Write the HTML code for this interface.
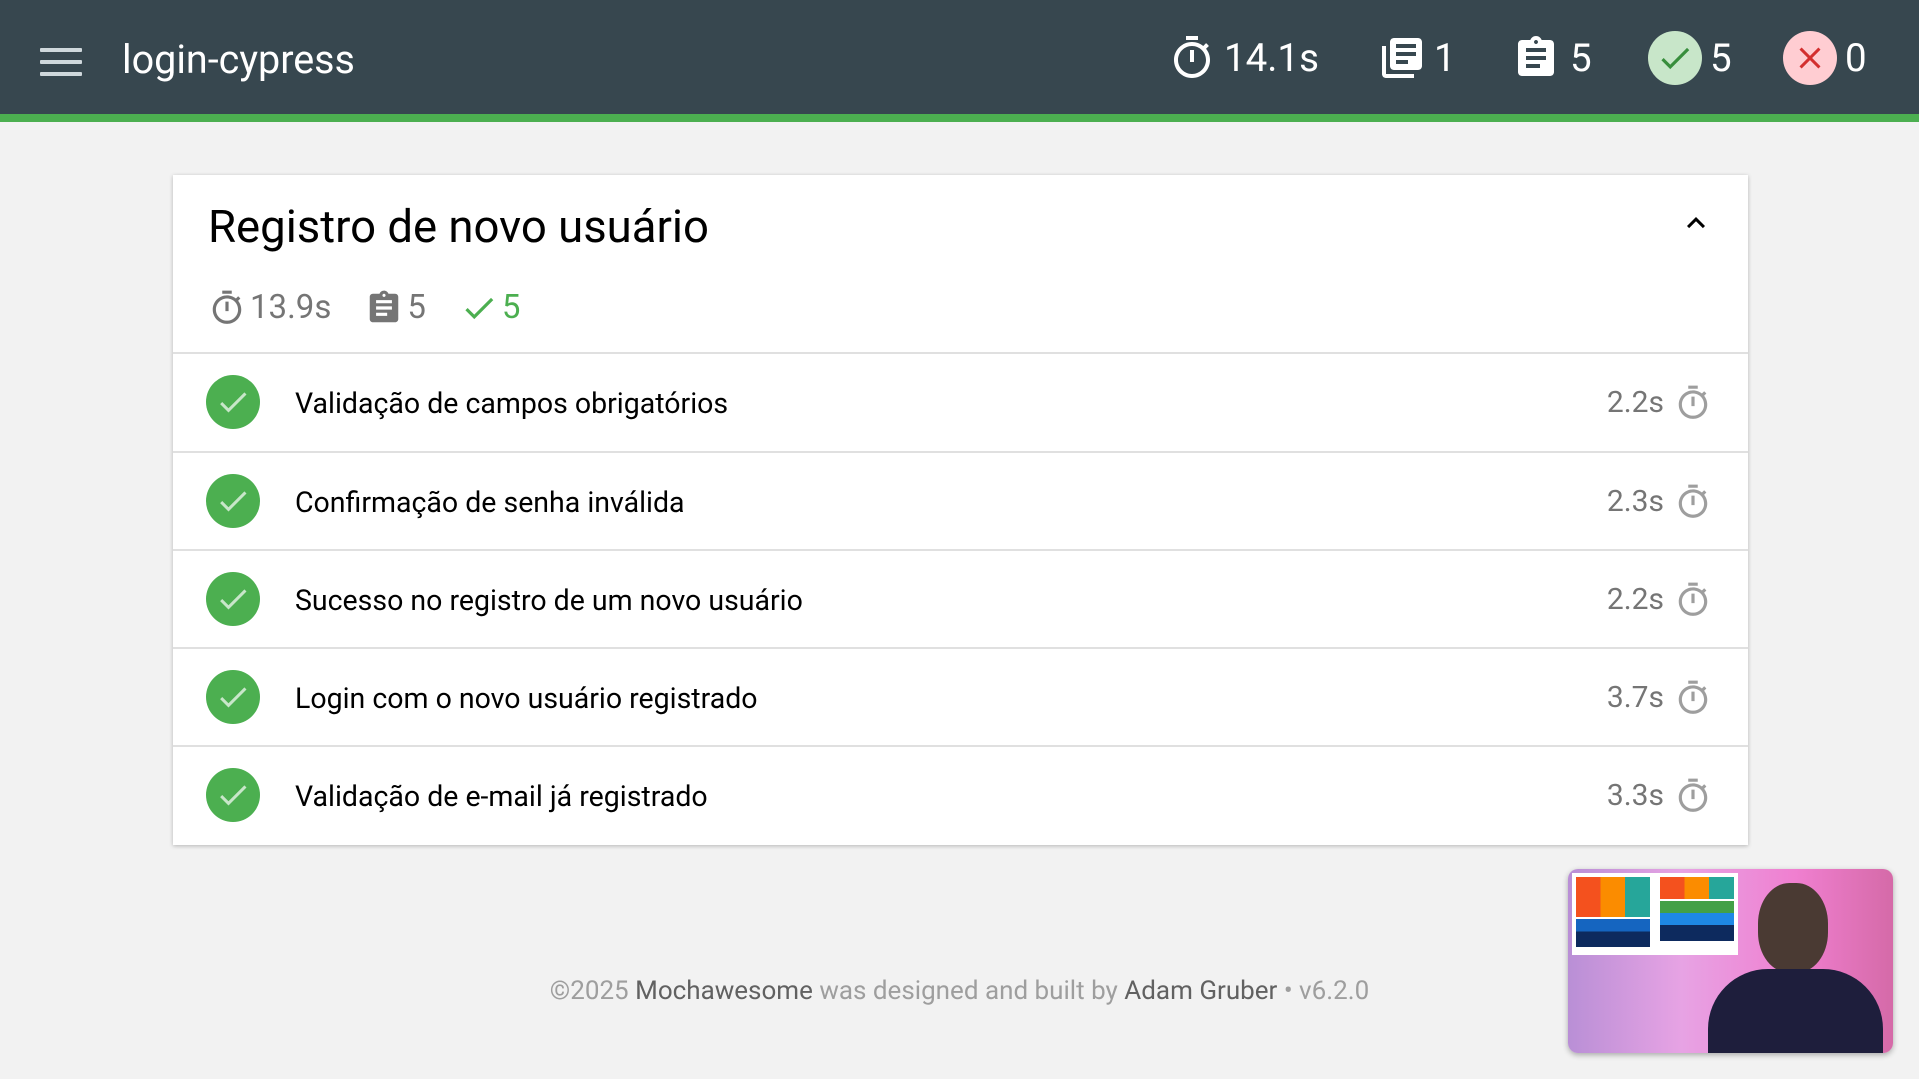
<!DOCTYPE html>
<html><head><meta charset="utf-8"><style>
*{margin:0;padding:0;box-sizing:border-box}
body{width:1919px;height:1079px;overflow:hidden;background:#f2f2f2;font-family:"Roboto","Liberation Sans",sans-serif;position:relative}
.hdr{position:absolute;left:0;top:0;width:1919px;height:122px;background:#37474f;border-bottom:8px solid #4caf50;color:#fff}
.ham{position:absolute;left:40px;top:48px;width:42px}
.ham div{height:4px;background:#cfd8dc;margin-bottom:8px;border-radius:1px}
.ttl{position:absolute;left:122px;top:36px;font-size:39.5px;color:#fff}
.st{position:absolute;top:34px;display:flex;align-items:center;font-size:38.5px;color:#fff}
.st svg{fill:#fff}
.circ{width:54px;height:54px;border-radius:50%;display:flex;align-items:center;justify-content:center;margin-right:8px}
.card{position:absolute;left:173px;top:175px;width:1575px;height:670px;background:#fff;box-shadow:0 1px 4px rgba(0,0,0,.25)}
.h1{position:absolute;left:35px;top:26px;font-size:45.5px;color:#000}
.chev{position:absolute;left:1505px;top:30px}
.meta{position:absolute;left:35px;top:113px;display:flex;align-items:center;font-size:33px;color:#757575}
.meta svg{fill:#757575}
.row{position:absolute;left:0;width:1575px;height:98px;border-top:2px solid #e0e0e0}
.ck{position:absolute;left:33px;top:21px;width:54px;height:54px;border-radius:50%;background:#4caf50;display:flex;align-items:center;justify-content:center}
.rt{position:absolute;left:122px;top:33px;font-size:28.5px;color:#000}
.dur{position:absolute;right:84px;top:31px;font-size:30px;color:#757575}
.tm{position:absolute;right:36px;top:30px;fill:#9e9e9e}
.foot{position:absolute;left:0;width:1919px;top:976px;text-align:center;font-size:26px;color:#9e9e9e}
.foot b{font-weight:normal;color:#616161}
.vid{position:absolute;left:1568px;top:869px;width:325px;height:184px;border-radius:10px;overflow:hidden;background:linear-gradient(90deg,#b98fd6 0%,#e7a3e4 35%,#f07fd0 70%,#d56aa8 100%);box-shadow:0 2px 6px rgba(0,0,0,.3)}
</style></head><body>
<div class="hdr">
 <div class="ham"><div></div><div></div><div></div></div>
 <div class="ttl">login-cypress</div>
 <div class="st" style="left:1168px"><svg width="48" height="48" viewBox="0 0 24 24"><path d="M15 1H9v2h6V1zm-4 13h2V8h-2v6zm8.03-6.61l1.42-1.42c-.43-.51-.9-.99-1.41-1.41l-1.42 1.42C16.07 4.74 14.12 4 12 4c-4.97 0-9 4.03-9 9s4.02 9 9 9 9-4.03 9-9c0-2.12-.74-4.07-1.97-5.61zM12 20c-3.87 0-7-3.13-7-7s3.13-7 7-7 7 3.13 7 7-3.13 7-7 7z"/></svg><span style="margin-left:8px">14.1s</span></div>
 <div class="st" style="left:1378px"><svg width="48" height="48" viewBox="0 0 24 24"><path d="M4 6H2v14c0 1.1.9 2 2 2h14v-2H4V6zm16-4H8c-1.1 0-2 .9-2 2v12c0 1.1.9 2 2 2h12c1.1 0 2-.9 2-2V4c0-1.1-.9-2-2-2zm-1 9H9V9h10v2zm-4 4H9v-2h6v2zm4-8H9V5h10v2z"/></svg><span style="margin-left:8px">1</span></div>
 <div class="st" style="left:1512px"><svg width="48" height="48" viewBox="0 0 24 24"><path d="M19 3h-4.18C14.4 1.84 13.3 1 12 1c-1.3 0-2.4.84-2.82 2H5c-1.1 0-2 .9-2 2v14c0 1.1.9 2 2 2h14c1.1 0 2-.9 2-2V5c0-1.1-.9-2-2-2zm-7 0c.55 0 1 .45 1 1s-.45 1-1 1-1-.45-1-1 .45-1 1-1zm2 14H7v-2h7v2zm3-4H7v-2h10v2zm0-4H7V7h10v2z"/></svg><span style="margin-left:10px">5</span></div>
 <div class="st" style="left:1648px;top:31px"><div class="circ" style="background:#c8e6c9"><svg width="38" height="38" viewBox="0 0 24 24" style="fill:#388e3c"><path d="M9 16.17L4.83 12l-1.42 1.41L9 19 21 7l-1.41-1.41z"/></svg></div><span>5</span></div>
 <div class="st" style="left:1783px;top:31px"><div class="circ" style="background:#ffcdd2"><svg width="36" height="36" viewBox="0 0 24 24" style="fill:#d32f2f"><path d="M19 6.41L17.59 5 12 10.59 6.41 5 5 6.41 10.59 12 5 17.59 6.41 19 12 13.41 17.59 19 19 17.59 13.41 12z"/></svg></div><span>0</span></div>
</div>
<div class="card">
 <div class="h1">Registro de novo usuário</div>
 <svg class="chev" width="36" height="36" viewBox="0 0 24 24"><path d="M7.41 15.41L12 10.83l4.59 4.58L18 14l-6-6-6 6z"/></svg>
 <div class="meta">
  <svg width="38" height="38" viewBox="0 0 24 24"><path d="M15 1H9v2h6V1zm-4 13h2V8h-2v6zm8.03-6.61l1.42-1.42c-.43-.51-.9-.99-1.41-1.41l-1.42 1.42C16.07 4.74 14.12 4 12 4c-4.97 0-9 4.03-9 9s4.02 9 9 9 9-4.03 9-9c0-2.12-.74-4.07-1.97-5.61zM12 20c-3.87 0-7-3.13-7-7s3.13-7 7-7 7 3.13 7 7-3.13 7-7 7z"/></svg><span style="margin-left:4px">13.9s</span>
  <svg style="margin-left:34px" width="38" height="38" viewBox="0 0 24 24"><path d="M19 3h-4.18C14.4 1.84 13.3 1 12 1c-1.3 0-2.4.84-2.82 2H5c-1.1 0-2 .9-2 2v14c0 1.1.9 2 2 2h14c1.1 0 2-.9 2-2V5c0-1.1-.9-2-2-2zm-7 0c.55 0 1 .45 1 1s-.45 1-1 1-1-.45-1-1 .45-1 1-1zm2 14H7v-2h7v2zm3-4H7v-2h10v2zm0-4H7V7h10v2z"/></svg><span style="margin-left:4px">5</span>
  <svg style="margin-left:34px;fill:#4caf50" width="38" height="38" viewBox="0 0 24 24"><path d="M9 16.17L4.83 12l-1.42 1.41L9 19 21 7l-1.41-1.41z"/></svg><span style="margin-left:4px;color:#4caf50">5</span>
 </div>
 <div class="row" style="top:177px"><div class="ck"><svg width="36" height="36" viewBox="0 0 24 24" fill="#c8e6c9"><path d="M9 16.17L4.83 12l-1.42 1.41L9 19 21 7l-1.41-1.41z"/></svg></div><div class="rt">Validação de campos obrigatórios</div><div class="dur">2.2s</div><svg class="tm" width="38" height="38" viewBox="0 0 24 24"><path d="M15 1H9v2h6V1zm-4 13h2V8h-2v6zm8.03-6.61l1.42-1.42c-.43-.51-.9-.99-1.41-1.41l-1.42 1.42C16.07 4.74 14.12 4 12 4c-4.97 0-9 4.03-9 9s4.02 9 9 9 9-4.03 9-9c0-2.12-.74-4.07-1.97-5.61zM12 20c-3.87 0-7-3.13-7-7s3.13-7 7-7 7 3.13 7 7-3.13 7-7 7z"/></svg></div>
 <div class="row" style="top:276px"><div class="ck"><svg width="36" height="36" viewBox="0 0 24 24" fill="#c8e6c9"><path d="M9 16.17L4.83 12l-1.42 1.41L9 19 21 7l-1.41-1.41z"/></svg></div><div class="rt">Confirmação de senha inválida</div><div class="dur">2.3s</div><svg class="tm" width="38" height="38" viewBox="0 0 24 24"><path d="M15 1H9v2h6V1zm-4 13h2V8h-2v6zm8.03-6.61l1.42-1.42c-.43-.51-.9-.99-1.41-1.41l-1.42 1.42C16.07 4.74 14.12 4 12 4c-4.97 0-9 4.03-9 9s4.02 9 9 9 9-4.03 9-9c0-2.12-.74-4.07-1.97-5.61zM12 20c-3.87 0-7-3.13-7-7s3.13-7 7-7 7 3.13 7 7-3.13 7-7 7z"/></svg></div>
 <div class="row" style="top:374px"><div class="ck"><svg width="36" height="36" viewBox="0 0 24 24" fill="#c8e6c9"><path d="M9 16.17L4.83 12l-1.42 1.41L9 19 21 7l-1.41-1.41z"/></svg></div><div class="rt">Sucesso no registro de um novo usuário</div><div class="dur">2.2s</div><svg class="tm" width="38" height="38" viewBox="0 0 24 24"><path d="M15 1H9v2h6V1zm-4 13h2V8h-2v6zm8.03-6.61l1.42-1.42c-.43-.51-.9-.99-1.41-1.41l-1.42 1.42C16.07 4.74 14.12 4 12 4c-4.97 0-9 4.03-9 9s4.02 9 9 9 9-4.03 9-9c0-2.12-.74-4.07-1.97-5.61zM12 20c-3.87 0-7-3.13-7-7s3.13-7 7-7 7 3.13 7 7-3.13 7-7 7z"/></svg></div>
 <div class="row" style="top:472px"><div class="ck"><svg width="36" height="36" viewBox="0 0 24 24" fill="#c8e6c9"><path d="M9 16.17L4.83 12l-1.42 1.41L9 19 21 7l-1.41-1.41z"/></svg></div><div class="rt">Login com o novo usuário registrado</div><div class="dur">3.7s</div><svg class="tm" width="38" height="38" viewBox="0 0 24 24"><path d="M15 1H9v2h6V1zm-4 13h2V8h-2v6zm8.03-6.61l1.42-1.42c-.43-.51-.9-.99-1.41-1.41l-1.42 1.42C16.07 4.74 14.12 4 12 4c-4.97 0-9 4.03-9 9s4.02 9 9 9 9-4.03 9-9c0-2.12-.74-4.07-1.97-5.61zM12 20c-3.87 0-7-3.13-7-7s3.13-7 7-7 7 3.13 7 7-3.13 7-7 7z"/></svg></div>
 <div class="row" style="top:570px"><div class="ck"><svg width="36" height="36" viewBox="0 0 24 24" fill="#c8e6c9"><path d="M9 16.17L4.83 12l-1.42 1.41L9 19 21 7l-1.41-1.41z"/></svg></div><div class="rt">Validação de e-mail já registrado</div><div class="dur">3.3s</div><svg class="tm" width="38" height="38" viewBox="0 0 24 24"><path d="M15 1H9v2h6V1zm-4 13h2V8h-2v6zm8.03-6.61l1.42-1.42c-.43-.51-.9-.99-1.41-1.41l-1.42 1.42C16.07 4.74 14.12 4 12 4c-4.97 0-9 4.03-9 9s4.02 9 9 9 9-4.03 9-9c0-2.12-.74-4.07-1.97-5.61zM12 20c-3.87 0-7-3.13-7-7s3.13-7 7-7 7 3.13 7 7-3.13 7-7 7z"/></svg></div>
</div>
<div class="foot">©2025 <b>Mochawesome</b> was designed and built by <b>Adam Gruber</b> • v6.2.0</div>
<div class="vid">
 <div style="position:absolute;left:4px;top:4px;width:166px;height:82px;background:#fff"></div>
 <div style="position:absolute;left:8px;top:8px;width:74px;height:40px;background:linear-gradient(90deg,#f4511e 33%,#fb8c00 33% 66%,#26a69a 66%)"></div>
 <div style="position:absolute;left:8px;top:50px;width:74px;height:28px;background:linear-gradient(#1565c0 45%,#0d2a5e 45%)"></div>
 <div style="position:absolute;left:92px;top:8px;width:74px;height:22px;background:linear-gradient(90deg,#f4511e 33%,#fb8c00 33% 66%,#26a69a 66%)"></div>
 <div style="position:absolute;left:92px;top:32px;width:74px;height:40px;background:linear-gradient(#43a047 30%,#1e88e5 30% 60%,#0d2a5e 60%)"></div>
 <div style="position:absolute;left:190px;top:14px;width:70px;height:90px;border-radius:45%;background:#4a3a33"></div>
 <div style="position:absolute;left:140px;top:100px;width:175px;height:90px;border-radius:60px 60px 0 0;background:#1e1e3c"></div>
</div>
</body></html>
